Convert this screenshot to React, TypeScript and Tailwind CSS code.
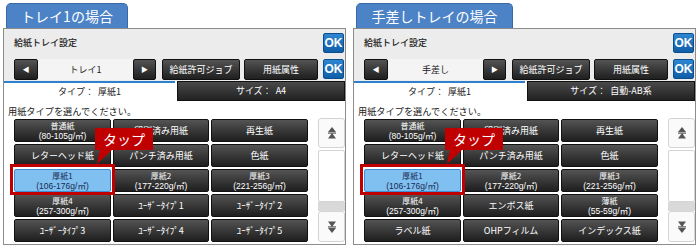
import React from 'react'

type Cell = { label: string; sub?: string; selected?: boolean }

const LEFT_GRID: Cell[] = [
  { label: '普通紙', sub: '(80-105g/㎡)' },
  { label: '印刷済み用紙' },
  { label: '再生紙' },
  { label: 'レターヘッド紙' },
  { label: 'パンチ済み用紙' },
  { label: '色紙' },
  { label: '厚紙1', sub: '(106-176g/㎡)', selected: true },
  { label: '厚紙2', sub: '(177-220g/㎡)' },
  { label: '厚紙3', sub: '(221-256g/㎡)' },
  { label: '厚紙4', sub: '(257-300g/㎡)' },
  { label: 'ﾕｰｻﾞｰﾀｲﾌﾟ1' },
  { label: 'ﾕｰｻﾞｰﾀｲﾌﾟ2' },
  { label: 'ﾕｰｻﾞｰﾀｲﾌﾟ3' },
  { label: 'ﾕｰｻﾞｰﾀｲﾌﾟ4' },
  { label: 'ﾕｰｻﾞｰﾀｲﾌﾟ5' },
]

const RIGHT_GRID: Cell[] = [
  ...LEFT_GRID.slice(0, 10),
  { label: 'エンボス紙' },
  { label: '薄紙', sub: '(55-59g/㎡)' },
  { label: 'ラベル紙' },
  { label: 'OHPフィルム' },
  { label: 'インデックス紙' },
]

const dark = 'bg-linear-to-b from-[#545454] to-[#1f1f1f] border border-[#111] rounded-[2px] text-white'

function OkButton() {
  return (
    <div className="w-[21px] h-[20px] rounded-[2px] bg-linear-to-b from-[#2f86d0] to-[#0f5ea8] border border-[#0b4f90] flex items-center justify-center text-white text-[12px] font-bold font-['Liberation_Sans',sans-serif]">
      OK
    </div>
  )
}

function UpIcon({ down }: { down?: boolean }) {
  return (
    <svg width="10" height="12" viewBox="0 0 10 12" className={down ? 'rotate-180' : ''}>
      <path d="M5 0 L9 5 L1 5 Z" fill="#555" />
      <rect x="1" y="5.5" width="8" height="1.2" fill="#555" />
      <path d="M5 6 L9 11.5 L1 11.5 Z" fill="#555" />
    </svg>
  )
}

function Panel({ title, tray, size, grid, tabW }: { title: string; tray: string; size: string; grid: Cell[]; tabW: number }) {
  return (
    <div className="relative w-[350px] h-[250px] pt-[3px] pl-[3px]">
      {/* heading tab */}
      <div
        className="ml-[3px] h-[25px] rounded-t-[5px] bg-[#4c82c6] border border-[#3868a8] border-b-0 flex items-center justify-center text-white text-[14px]"
        style={{ width: tabW }}
      >
        {title}
      </div>

      <div className="w-[343px] h-[217px] border border-[#8c8c8c] bg-white flex flex-col">
        {/* header */}
        <div className="h-[28px] bg-[#ececec] flex items-center justify-between pl-[10px] pr-[1px]">
          <span className="text-[9px] font-medium text-[#222]">給紙トレイ設定</span>
          <OkButton />
        </div>

        {/* tray selector row */}
        <div className="h-[24px] bg-[#ececec] flex items-start pt-[2px] pl-[10px]">
          <div className={`${dark} w-[24px] h-[21px] flex items-center justify-center text-[7px]`}>◀</div>
          <div className="w-[95px] h-[21px] bg-[#f4f4f4] flex items-center justify-center text-[9px] text-[#222]">{tray}</div>
          <div className={`${dark} w-[23px] h-[21px] flex items-center justify-center text-[7px]`}>▶</div>
          <div className={`${dark} ml-[6px] w-[78px] h-[21px] flex items-center justify-center text-[9px]`}>給紙許可ジョブ</div>
          <div className={`${dark} ml-[4px] w-[74px] h-[21px] flex items-center justify-center text-[9px]`}>用紙属性</div>
          <div className="ml-[5px]">
            <OkButton />
          </div>
        </div>

        {/* tabs */}
        <div className="h-[20px] flex bg-white">
          <div className="w-[171px] border-t-2 border-[#2f7fcf] flex items-center justify-center text-[9px] text-[#222]">
            タイプ：&nbsp;&nbsp;厚紙1
          </div>
          <div className="ml-[2px] flex-1 bg-linear-to-b from-[#4a4a4a] to-[#222] border border-[#111] flex items-center justify-center text-[9px] text-white">
            サイズ：&nbsp;&nbsp;{size}
          </div>
        </div>

        {/* content */}
        <div className="flex-1 flex flex-col">
          <div className="pl-[4px] pt-[4px] h-[18px] text-[9.2px] leading-[12px] text-[#222]">用紙タイプを選んでください。</div>
          <div className="flex pl-[10px]">
            <div className="grid grid-cols-[97px_96px_97px] gap-x-[2px] gap-y-[2px] auto-rows-[23px] w-[294px]">
              {grid.map((c, i) => (
                <div
                  key={i}
                  className={
                    c.selected
                      ? 'bg-[#80c0f0] border border-[#3f8fd6] rounded-[2px] text-[#1a2a55] flex flex-col items-center justify-center'
                      : `${dark} flex flex-col items-center justify-center`
                  }
                >
                  <span className={c.sub ? 'text-[8px] leading-[11px]' : 'text-[9px] leading-[11px]'}>{c.label}</span>
                  {c.sub && (
                    <span className="text-[8.5px] leading-[10px] font-['Liberation_Sans','Noto_Sans_CJK_JP',sans-serif]">{c.sub}</span>
                  )}
                </div>
              ))}
            </div>
            <div className="ml-[10px] w-[27px] flex flex-col -mt-[1px]">
              <div className="h-[30px] bg-[#fafafa] border border-[#d4d4d4] rounded-[3px] flex items-center justify-center">
                <UpIcon />
              </div>
              <div className="mt-[2px] h-[52px] bg-white border border-[#d4d4d4] rounded-[2px]" />
              <div className="h-[9px] bg-[#d9d9d9]" />
              <div className="h-[31px] bg-[#fafafa] border border-[#d4d4d4] rounded-[3px] flex items-center justify-center">
                <UpIcon down />
              </div>
            </div>
          </div>
        </div>
      </div>

      {/* tap callout overlay */}
      <div className="absolute left-[10px] top-[164px] w-[105px] h-[31px] border-[3px] border-[#c00000]" />
      <div className="absolute left-[95px] top-[128px] w-[58px] h-[22px] bg-[#c00000] flex items-center justify-center text-white text-[14px]">
        タップ
      </div>
      <svg className="absolute left-[96px] top-[149px]" width="20" height="16" viewBox="0 0 20 16">
        <path d="M4 0 L17 0 L1 15 Z" fill="#c00000" />
      </svg>
    </div>
  )
}

export default function App() {
  return (
    <div className="w-[700px] h-[250px] bg-white flex font-['Noto_Sans_CJK_JP',sans-serif]">
      <Panel title="トレイ1の場合" tray="トレイ1" size="A4" grid={LEFT_GRID} tabW={122} />
      <Panel title="手差しトレイの場合" tray="手差し" size="自動-AB系" grid={RIGHT_GRID} tabW={157} />
    </div>
  )
}
